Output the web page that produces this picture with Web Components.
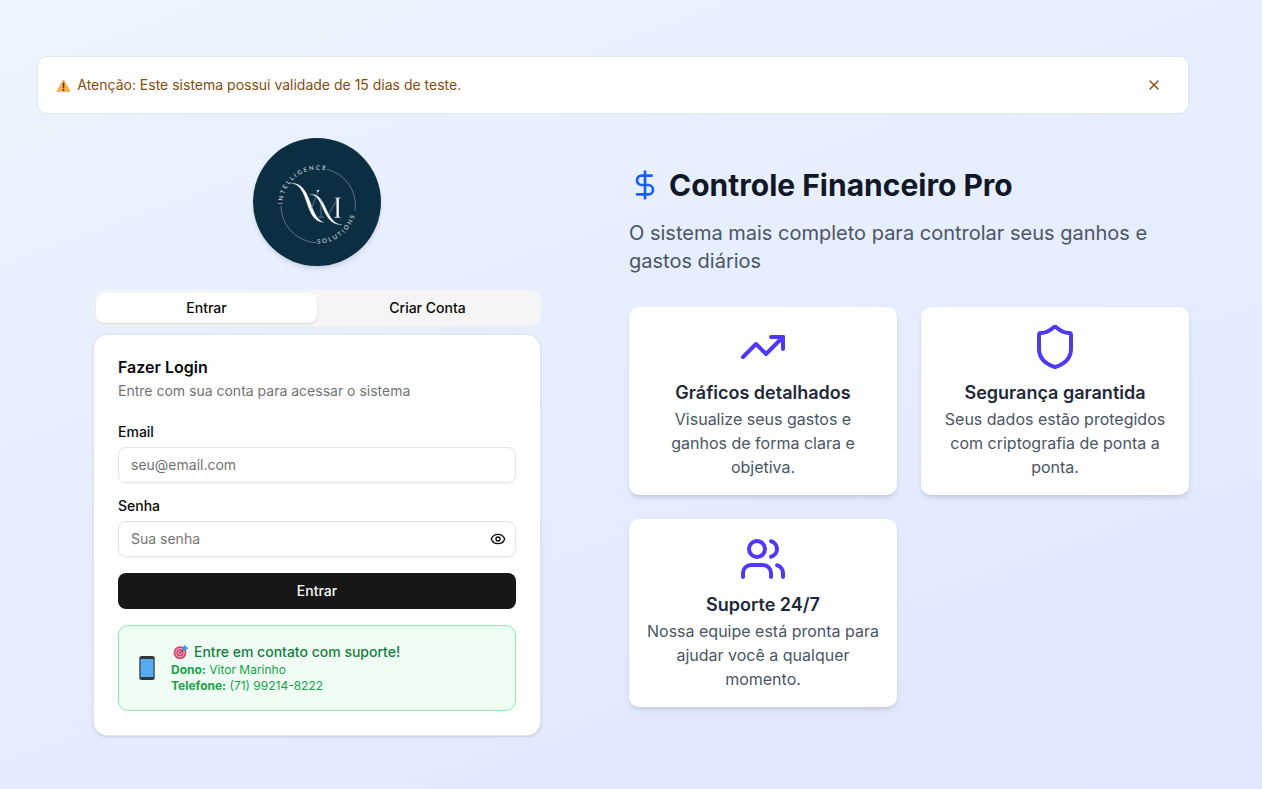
<!DOCTYPE html>
<html lang="pt-BR">
<head>
<meta charset="utf-8">
<title>Controle Financeiro Pro</title>
<style>
  html, body { margin: 0; height: 100%; }
  body { font: 14px/20px Inter, "Liberation Sans", sans-serif; color: #0a0a0a; overflow: hidden; }
</style>
</head>
<body>
<finance-app></finance-app>
<script>
const define = (name, html) => {
  const template = document.createElement('template');
  template.innerHTML = `<style>*{box-sizing:border-box}:host{display:block;box-sizing:border-box}svg{display:block;flex:none}p,h1,h2,h3{margin:0}</style>${html}`;
  customElements.define(name, class extends HTMLElement {
    constructor() {
      super();
      this.attachShadow({ mode: 'open' }).append(template.content.cloneNode(true));
    }
  });
};

const icons = {
  dollar: '<path d="M12 2v20"/><path d="M17 5H9.5a3.5 3.5 0 0 0 0 7h5a3.5 3.5 0 0 1 0 7H6"/>',
  trend: '<path d="M16 7h6v6"/><path d="m22 7-8.5 8.5-5-5L2 17"/>',
  shield: '<path d="M20 13c0 5-3.5 7.5-7.66 8.95a1 1 0 0 1-.67-.01C7.5 20.5 4 18 4 13V6a1 1 0 0 1 1-1c2 0 4.5-1.2 6.24-2.72a1.17 1.17 0 0 1 1.52 0C14.51 3.81 17 5 19 5a1 1 0 0 1 1 1z"/>',
  users: '<path d="M16 21v-2a4 4 0 0 0-4-4H6a4 4 0 0 0-4 4v2"/><path d="M16 3.128a4 4 0 0 1 0 7.744"/><path d="M22 21v-2a4 4 0 0 0-3-3.87"/><circle cx="9" cy="7" r="4"/>',
  eye: '<path d="M2.062 12.348a1 1 0 0 1 0-.696 10.75 10.75 0 0 1 19.876 0 1 1 0 0 1 0 .696 10.75 10.75 0 0 1-19.876 0"/><circle cx="12" cy="12" r="3"/>',
  close: '<path d="M18 6 6 18"/><path d="m6 6 12 12"/>'
};

customElements.define('line-icon', class extends HTMLElement {
  constructor() { super(); this.attachShadow({ mode: 'open' }); }
  connectedCallback() {
    const size = this.getAttribute('size');
    this.shadowRoot.innerHTML = `<style>:host{display:block;flex:none}svg{display:block}</style>
      <svg width="${size}" height="${size}" viewBox="0 0 24 24" fill="none" stroke="currentColor" stroke-width="2" stroke-linecap="round" stroke-linejoin="round">${icons[this.getAttribute('name')]}</svg>`;
  }
});

define('trial-banner', `
<style>
  :host{display:flex;align-items:center;justify-content:space-between;height:58px;padding:0 16px;background:#fff;border:1px solid #e2e5ea;border-radius:10px;color:#854d0e}
  .msg{display:flex;align-items:center;gap:6.25px;padding-left:2px}
  svg{position:relative;top:1px}
  button{display:grid;place-items:center;width:36px;height:24px;padding:0;border:0;background:none;color:inherit}
</style>
<div class="msg">
  <svg width="15" height="14" viewBox="0 0 15 14"><path d="M6.7 1.3q.8-1.2 1.6 0l5.9 10.2q.5 1.3-.8 1.4H1.6q-1.3-.1-.8-1.4z" fill="#fbb04c"/><path d="M7.5 4.2v4.6" stroke="#49392d" stroke-width="1.5" stroke-linecap="round"/><circle cx="7.5" cy="11" r=".9" fill="#49392d"/></svg>
  <span><slot></slot></span>
</div>
<button aria-label="Fechar"><line-icon name="close" size="16"></line-icon></button>`);

define('brand-logo', `
<style>
  :host{width:128px;height:128px;border-radius:50%;background:#0b2e42;box-shadow:0 4px 6px -1px #0000001a,0 2px 4px -2px #0000001a}
  text{font-family:Lato,sans-serif;font-size:18px;fill:#e4eaed}
</style>
<svg width="128" height="128" viewBox="24 24 384 384" fill="none" aria-label="VM Intelligence Solutions">
  <defs>
    <path id="top" d="M112 226a107 107 0 0 1 214 0"/>
    <path id="bottom" d="M211 340a114 114 0 0 0 122-114"/>
  </defs>
  <path d="M246 118A111 111 0 0 1 330 242M214 338A111 111 0 0 1 108 228" stroke="#8499a3" stroke-width="2"/>
  <text textLength="187"><textPath href="#top" startOffset="3" textLength="187">INTELLIGENCE</textPath></text>
  <text textLength="149"><textPath href="#bottom" startOffset="6" textLength="149">SOLUTIONS</textPath></text>
  <g fill="#fff">
    <path d="M139 160C168 159 181 179 194 212C206 246 216 271 237 277C210 277 198 255 186 220C176 190 166 162 139 160z" stroke="#fff" stroke-width=".6"/>
    <path d="M194 193C217 191 228 204 241 232C254 261 267 284 291 284C262 286 247 265 235 238C223 211 215 194 194 193z" stroke="#fff" stroke-width=".6"/>
  </g>
  <path d="M199 235L219 184M213 182L224 180M228 207V260M220 261H237M251 254L277 206" stroke="#8299a6" stroke-width="2"/>
  <circle cx="219" cy="183" r="3" fill="#dce4e8"/>
  <path d="M278 205V261" stroke="#fff" stroke-width="7"/>
  <path d="M271 204H286M269 262H286" stroke="#fff" stroke-width="2.5"/>
</svg>`);

define('auth-tabs', `
<style>
  :host{display:grid;grid-template-columns:1fr 1fr;height:36px;padding:3px;border-radius:10px;background:#f5f5f5;font-weight:500}
  button{font:inherit;color:inherit;border:0;background:none;border-radius:8px;padding:0;height:30px}
  .on{background:#fff;box-shadow:0 1px 3px #0000001a,0 1px 2px -1px #0000001a}
</style>
<button class="on">Entrar</button><button>Criar Conta</button>`);

define('form-field', `
<style>
  :host{display:grid;gap:8px}
  .label{font-weight:500;line-height:14px}
  .box{display:flex;align-items:center;justify-content:space-between;height:36px;padding:0 9px 0 12px;border:1px solid #e5e5e5;border-radius:8px;color:#737373;box-shadow:0 1px 2px #0000000d}
  ::slotted(line-icon){color:#0a0a0a}
</style>
<div class="label"><slot name="label"></slot></div>
<div class="box"><span><slot></slot></span><slot name="action"></slot></div>`);

define('support-box', `
<style>
  :host{display:flex;align-items:center;gap:12px;height:86px;padding:16px;border:1px solid #86efac;border-radius:10px;background:#f0fdf4;color:#16a34a;font-size:12px;line-height:16px}
  .title{display:flex;align-items:center;gap:5px;padding-left:2px;font-size:14px;line-height:20px;font-weight:500;color:#15803d}
</style>
<svg width="24" height="26" viewBox="0 0 24 26"><rect x="4.3" y="1" width="15.4" height="24" rx="2.3" fill="#31373d"/><rect x="5.5" y="4" width="13" height="18" fill="#55acee"/></svg>
<div>
  <div class="title">
    <svg width="16" height="16" viewBox="0 0 16 16" fill="none"><circle cx="7" cy="8.7" r="6.4" fill="#dd3e69"/><circle cx="7" cy="8.7" r="4.2" stroke="#efb5c6" stroke-width="1.1"/><circle cx="7" cy="8.7" r="1.8" stroke="#f0b9c9" stroke-width=".9"/><path d="M7 8.7L12 4" stroke="#44708f" stroke-width="1.2"/><path d="M9.6 6.3L9.8 3L12.3 .6L13 3L15.6 3.8L13 6.3z" fill="#3a9be8"/></svg>
    <span>Entre em contato com suporte!</span>
  </div>
  <div><b>Dono:</b> Vitor Marinho</div>
  <div><b>Telefone:</b> (71) 99214-8222</div>
</div>`);

define('login-card', `
<style>
  :host{padding:24px;background:#fff;border:1px solid #e2e5ea;border-radius:14px;box-shadow:0 1px 3px #0000001a,0 1px 2px -1px #0000001a}
  h2{font-size:16px;line-height:16px;font-weight:600;margin-bottom:6px}
  p{color:#737373;margin-bottom:24px}
  form{display:grid;gap:16px}
  .submit{height:36px;border:0;border-radius:8px;background:#171717;color:#fafafa;font:inherit;font-weight:500}
</style>
<h2>Fazer Login</h2>
<p>Entre com sua conta para acessar o sistema</p>
<form>
  <form-field><span slot="label">Email</span>seu@email.com</form-field>
  <form-field><span slot="label">Senha</span>Sua senha<line-icon slot="action" name="eye" size="16"></line-icon></form-field>
  <button type="button" class="submit">Entrar</button>
  <support-box></support-box>
</form>`);

define('feature-card', `
<style>
  :host{display:flex;flex-direction:column;align-items:center;height:188px;padding:16px;border-radius:10px;background:#fff;text-align:center;box-shadow:0 4px 6px -1px #0000001a,0 2px 4px -2px #0000001a}
  ::slotted(line-icon){color:#4f39f6;margin-bottom:8px}
  h3{font-size:18px;line-height:28px;font-weight:600;color:#1e2939}
  p{font-size:16px;line-height:24px;color:#4a5565}
</style>
<slot name="icon"></slot>
<h3><slot name="title"></slot></h3>
<p><slot></slot></p>`);

define('product-pitch', `
<style>
  h1{display:flex;align-items:center;gap:8px;font-size:30px;line-height:36px;font-weight:700;color:#101828;margin-bottom:16px}
  h1 line-icon{color:#155dfc}
  .lead{font-size:20px;line-height:28px;color:#4a5565;margin-bottom:32px}
  .grid{display:grid;grid-template-columns:1fr 1fr;gap:24px}
</style>
<h1><line-icon name="dollar" size="32"></line-icon><span>Controle Financeiro Pro</span></h1>
<p class="lead">O sistema mais completo para controlar seus ganhos e gastos diários</p>
<div class="grid">
  <feature-card><line-icon slot="icon" name="trend" size="48"></line-icon><span slot="title">Gráficos detalhados</span>Visualize seus gastos e ganhos de forma clara e objetiva.</feature-card>
  <feature-card><line-icon slot="icon" name="shield" size="48"></line-icon><span slot="title">Segurança garantida</span>Seus dados estão protegidos com criptografia de ponta a ponta.</feature-card>
  <feature-card><line-icon slot="icon" name="users" size="48"></line-icon><span slot="title">Suporte 24/7</span>Nossa equipe está pronta para ajudar você a qualquer momento.</feature-card>
</div>`);

define('finance-app', `
<style>
  :host{min-height:100vh;padding:56px 73px 53px 37px;background:linear-gradient(160deg,#ecf4ff,#e0e7ff)}
  main{display:grid;grid-template-columns:560px 560px;gap:32px;align-items:center;margin-top:24px}
  .auth{display:flex;flex-direction:column;align-items:center}
  brand-logo{margin-bottom:24px}
  auth-tabs{width:448px;margin-bottom:8px}
  login-card{width:448px}
</style>
<trial-banner>Atenção: Este sistema possui validade de 15 dias de teste.</trial-banner>
<main>
  <section class="auth"><brand-logo></brand-logo><auth-tabs></auth-tabs><login-card></login-card></section>
  <product-pitch></product-pitch>
</main>`);
</script>
</body>
</html>
